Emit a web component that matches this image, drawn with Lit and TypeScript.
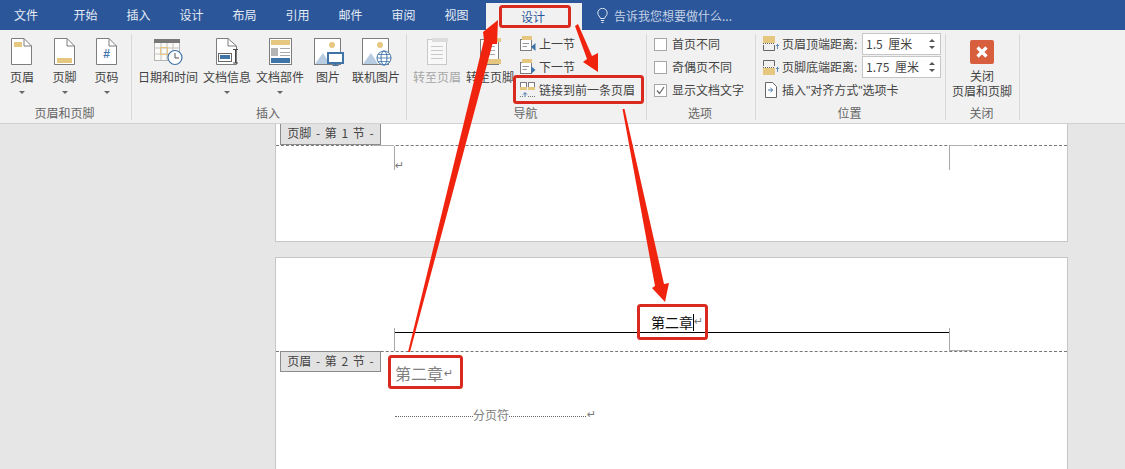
import { LitElement, html, css, svg } from "lit";
import { customElement } from "lit/decorators.js";

const G = "#e6c77f";
const B = "#3f74a8";
const S = "#7d7d7d";

const page = (inner: unknown, w = 34, dx = 6) => html`<svg width="${w}" height="28" viewBox="0 0 ${w} 28">
  <g transform="translate(${dx} 0)">
    <path d="M.5.5H13L20.500 8V26.500H.5Z" fill="#fff" stroke="${S}"/><path d="M13 .5V8H20.500" fill="none" stroke="${S}"/>
    ${inner}
  </g></svg>`;

const icons: Record<string, unknown> = {
  header: page(svg`<rect x="3" y="4" width="8" height="5" fill="${G}"/>`),
  footer: page(svg`<rect x="3" y="20" width="15" height="5" fill="${G}"/>`),
  number: page(svg`<text x="10.500" y="20" text-anchor="middle" font-family="Liberation Sans" font-size="12" font-weight="700" fill="${B}">#</text>`),
  date: html`<svg width="34" height="28" viewBox="0 0 34 28">
    <rect x="3.500" y="2.500" width="25" height="20" fill="#fbfaf6" stroke="#b5b5b5"/>
    <rect x="3" y="1" width="26" height="4" fill="#777"/>
    <path d="M3.500 10H28M3.500 16H28M10 5V22M16 5V22M22 5V22" stroke="#c2c2c2"/>
    <rect x="9.500" y="9.500" width="7" height="7" fill="none" stroke="${G}"/>
    <circle cx="24" cy="19.500" r="7" fill="#fff" stroke="${B}" stroke-width="1.200"/>
    <path d="M24 15V20H28" fill="none" stroke="#555"/></svg>`,
  info: html`<svg width="34" height="28" viewBox="0 0 34 28">
    <path d="M6.500.5H18L26.500 8V26.500H6.500Z" fill="#fff" stroke="${S}"/><path d="M18 .5V8H26.500" fill="none" stroke="${S}"/>
    <rect x="8.500" y="15.500" width="13" height="8" fill="#fff" stroke="#666"/>
    <rect x="10" y="17" width="10" height="4" fill="${B}"/>
    <path d="M23 11.500H28M25.500 11.500V25M23 25H28" fill="none" stroke="#444"/></svg>`,
  parts: html`<svg width="34" height="28" viewBox="0 0 34 28">
    <rect x="6.500" y=".5" width="22" height="26" fill="#fff" stroke="${S}"/>
    <rect x="8" y="2" width="19" height="5" fill="${G}"/>
    <rect x="8" y="10" width="7" height="8" fill="#b5b5b5"/>
    <path d="M17 10.500H27M17 14.500H27M17 17.500H27" stroke="#aaa"/>
    <rect x="8" y="20" width="19" height="5" fill="${B}"/></svg>`,
  picture: html`<svg width="34" height="28" viewBox="0 0 34 28">
    <rect x="3.500" y=".5" width="26" height="26" fill="#fff" stroke="${S}"/>
    <circle cx="21" cy="7" r="3" fill="${G}"/>
    <path d="M4 26L12 15L19 26Z" fill="#b9cde2"/>
    <rect x="17" y="15" width="15" height="10" fill="#fff" stroke="${B}" stroke-width="2"/>
    <path d="M24.500 25V27M21.500 27.500H27.500" stroke="${B}"/></svg>`,
  online: html`<svg width="34" height="28" viewBox="0 0 34 28">
    <rect x="3.500" y=".5" width="26" height="26" fill="#fff" stroke="${S}"/>
    <circle cx="21" cy="7" r="3" fill="${G}"/>
    <path d="M4 26L12 15L19 26Z" fill="#b9cde2"/>
    <circle cx="25" cy="20" r="7" fill="#fff" stroke="${B}"/>
    <ellipse cx="25" cy="20" rx="3" ry="7" fill="none" stroke="${B}"/>
    <path d="M18 20H32M19 16.500H31M19 23.500H31" stroke="${B}" stroke-width=".8"/></svg>`,
  gotoH: html`<svg width="34" height="28" viewBox="0 0 34 28">
    <rect x="7.500" y="1.500" width="19" height="25" fill="#f8f8f8" stroke="#c9c9c9"/>
    <rect x="12" y="0" width="16" height="4" fill="#dcdcdc"/>
    <path d="M11 8.500H23M11 12.500H23M11 16.500H23M11 20.500H23" stroke="#c9c9c9"/></svg>`,
  gotoF: html`<svg width="34" height="28" viewBox="0 0 34 28">
    <rect x="7.500" y="1.500" width="18" height="25" fill="#fff" stroke="${S}"/>
    <rect x="21" y="0" width="7" height="4" fill="${G}"/>
    <rect x="8" y="21" width="20" height="5" fill="${G}"/>
    <path d="M11 8.500H22M11 12.500H22M11 16.500H22" stroke="#aaa"/></svg>`,
  prev: html`<svg width="16" height="16" viewBox="0 0 16 16">
    <rect x=".5" y="3.500" width="11" height="11" fill="#fff" stroke="${S}"/>
    <rect x="2" y="0" width="10" height="4" fill="${G}"/>
    <path d="M2.500 7.500H9M2.500 10.500H7" stroke="#999"/>
    <path d="M15.500 7V15L11 11Z" fill="${B}"/></svg>`,
  next: html`<svg width="16" height="16" viewBox="0 0 16 16">
    <rect x=".5" y="3.500" width="11" height="11" fill="#fff" stroke="${S}"/>
    <rect x="2" y="0" width="10" height="4" fill="${G}"/>
    <path d="M2.500 7.500H9M2.500 10.500H7" stroke="#999"/>
    <path d="M11 7V15L15.500 11Z" fill="${B}"/></svg>`,
  link: html`<svg width="16" height="16" viewBox="0 0 16 16">
    <rect x=".5" y=".5" width="6" height="5" fill="#fff" stroke="${S}"/><rect x="8.500" y=".5" width="6" height="5" fill="#fff" stroke="${S}"/>
    <rect x="0" y="5" width="7" height="3" fill="${G}"/><rect x="8" y="5" width="7" height="3" fill="${G}"/>
    <path d="M5 15V11M3 12.500L5 10.500L7 12.500" fill="none" stroke="${B}"/>
    <path d="M0 14.500H3M8 14.500H15" stroke="#777" stroke-dasharray="1 1"/></svg>`,
  top: html`<svg width="16" height="16" viewBox="0 0 16 16">
    <rect x="0" y="0" width="12" height="7" fill="${G}"/>
    <path d="M.5 9V14.500H11.500V9" fill="none" stroke="#666"/>
    <path d="M0 7.500H12" stroke="#666" stroke-dasharray="1 1"/>
    <path d="M14.500 8V13M13 10L14.500 8.500L16 10" fill="none" stroke="${B}" stroke-width=".8"/></svg>`,
  bottom: html`<svg width="16" height="16" viewBox="0 0 16 16">
    <rect x="0" y="9" width="12" height="7" fill="${G}"/>
    <path d="M.5 7V1.500H11.500V7" fill="none" stroke="#666"/>
    <path d="M0 8.500H12" stroke="#666" stroke-dasharray="1 1"/>
    <path d="M14.500 8V13M13 10L14.500 8.500L16 10" fill="none" stroke="${B}" stroke-width=".8"/></svg>`,
  align: html`<svg width="16" height="16" viewBox="0 0 16 16">
    <path d="M2.500.5H9.500L13.500 4.500V15.500H2.500Z" fill="#fff" stroke="#666"/>
    <path d="M5 8H9M7.500 6L9.800 8L7.500 10" fill="none" stroke="${B}"/></svg>`,
  close: html`<svg width="34" height="28" viewBox="0 0 34 28">
    <rect x="5" y="2" width="24" height="24" rx="2" fill="#d75f3e"/>
    <path d="M12.500 9.500L21.500 18.500M21.500 9.500L12.500 18.500" stroke="#fff" stroke-width="3.200"/></svg>`,
};

const tabs = ["开始", "插入", "设计", "布局", "引用", "邮件", "审阅", "视图"];

type Big = { icon: string; label: string; w: number; arrow?: boolean; off?: boolean };

@customElement("app-root")
export class AppRoot extends LitElement {
  static styles = css`
    :host { display: block; width: 1125px; height: 469px; overflow: hidden; position: relative;
      font-family: "Noto Sans CJK SC", "Liberation Sans", sans-serif; font-size: 12px; color: #444; }
    .bar { height: 30px; background: #2b579a; display: flex; color: #e6ecf5; }
    .tab { width: 53px; line-height: 30px; text-align: center; flex: none; }
    .file { width: 52px; margin-right: 7px; }
    .view { margin-right: 3px; }
    .active { width: 94px; padding-right: 2px; margin-top: 3px; line-height: 27px; background: #f1f1f1; color: #2b579a; }
    .tell { display: flex; align-items: center; gap: 6px; margin-left: 15px; color: #c3d0e4; }
    .ribbon { height: 94px; box-sizing: border-box; background: #f1f1f1; border-bottom: 1px solid #d2d2d2; padding-top: 4px; display: flex; }
    .group { height: 86px; border-right: 1px solid #d8d8d8; display: flex; flex-direction: column; justify-content: space-between; flex: none; box-sizing: border-box; }
    .content { display: flex; }
    .glabel { text-align: center; line-height: 14px; color: #666; padding-right: 2px; }
    .big { display: flex; flex-direction: column; align-items: center; flex: none; padding-top: 4px; white-space: nowrap; }
    .big svg { display: block; }
    .big .t { line-height: 16px; margin-top: 3px; }
    .off { color: #a6a6a6; }
    .caret { width: 0; height: 0; border: 3px solid transparent; border-top: 3px solid #666; border-bottom: 0; margin-top: 6px; }
    .g1 { width: 132px; }
    .g2 { width: 275px; }
    .g2 .content { padding-left: 6px; gap: 5px; }
    .g3 { width: 240px; }
    .g3 .content { padding-left: 6px; gap: 5px; }
    .g4 { width: 109px; }
    .g5 { width: 190px; }
    .g6 { width: 74px; }
    .stack { display: flex; flex-direction: column; gap: 3px; }
    .nav { margin-left: 1px; }
    .row { height: 20px; display: flex; align-items: center; gap: 3px; white-space: nowrap; }
    .row > span { margin-bottom: 2px; }
    .checks { padding-left: 7px; }
    .check { gap: 5px; color: #444; }
    .box { width: 11px; height: 11px; border: 1px solid #a6a6a6; background: #fff; display: flex; }
    .pos { padding-left: 7px; gap: 1px; margin-top: -1px; }
    .pos .row { height: 22px; }
    .pos .name { width: 77px; }
    .field { width: 74px; height: 20px; border: 1px solid #c6c6c6; background: #fff; display: flex; align-items: center; justify-content: space-between; padding-left: 3px; word-spacing: 3px; }
    .field span { margin-bottom: 2px; }
    .q { font-family: "Liberation Sans", sans-serif; }
    .spin { display: flex; flex-direction: column; gap: 4px; margin-right: 5px; }
    .spin i { width: 0; height: 0; border-left: 3px solid transparent; border-right: 3px solid transparent; }
    .spin .u { border-bottom: 3px solid #555; }
    .spin .d { border-top: 3px solid #555; }
    .g6 .content { justify-content: center; text-align: center; padding-right: 1px; }
    .close { display: flex; flex-direction: column; align-items: center; padding-top: 4px; line-height: 15px; white-space: nowrap; }
    .close svg { display: block; margin-bottom: 2px; }

    .doc { height: 345px; background: #e6e6e6; overflow: hidden; padding-left: 275px; box-sizing: border-box; }
    .page { position: relative; width: 793px; background: #fff; border: 1px solid #c6c6c6; box-sizing: border-box; }
    .p1 { height: 118px; border-top: 0; padding-top: 21px; }
    .p2 { margin-top: 15px; height: 300px; padding-top: 54px; }
    .dash { border-top: 1px dashed #777; height: 0; }
    .tag { position: absolute; left: 4px; width: 101px; height: 21px; box-sizing: border-box; background: #e2e2e2; border: 1px solid #8c8c8c; line-height: 18px; text-align: center; color: #444; white-space: pre; word-spacing: 2px; }
    .p1 .tag { top: 0; border-top: 0; height: 21px; }
    .p2 .tag { top: 93px; }
    .marks { margin-left: 118px; width: 556px; box-sizing: border-box; border-left: 1px solid #a8a8a8; border-right: 1px solid #a8a8a8; position: relative; }
    .m1 { height: 24px; }
    .stub-l, .stub-r { position: absolute; width: 22px; border-top: 1px solid #b0b0b0; }
    .m1 .stub-l { left: -23px; top: -1px; }
    .m1 .stub-r { right: -23px; top: -1px; }
    .m2 { height: 23px; margin-top: -5px; }
    .m2 .stub-r { right: -23px; bottom: 0; }
    .ret { font-family: "DejaVu Sans", sans-serif; font-size: 11px; color: #777; line-height: 10px; }
    .m1 .ret { position: absolute; left: 0; top: 15px; }
    .hdr { margin-left: 118px; width: 556px; height: 20px; border-bottom: 1px solid #000; text-align: center; line-height: 20px; font-size: 14px; color: #111; }
    .cur { position: absolute; width: 1px; height: 17px; background: #000; margin-top: 2px; }
    .hdr .ret { position: absolute; margin-left: 1px; margin-top: 5px; }
    .gray { margin: 10px 0 0 119px; font-size: 16px; line-height: 22px; color: #808080; display: flex; align-items: center; }
    .gray .ret { margin-left: 1px; margin-top: 2px; }
    .brk { margin: 24px 0 0 119px; display: flex; align-items: center; width: 240px; color: #808080; line-height: 14px; white-space: nowrap; }
    .brk i { flex: none; height: 0; border-top: 1px dotted #666; margin-top: 2px; }
    .brk .a { width: 78px; }
    .brk .b { width: 77px; }
    .brk .ret { margin-left: 1px; }
    .over { position: absolute; left: 0; top: 0; pointer-events: none; }
  `;

  big(b: Big) {
    return html`<div class="big ${b.off ? "off" : ""}" style="width:${b.w}px">
      ${icons[b.icon]}<div class="t">${b.label}</div>${b.arrow ? html`<div class="caret"></div>` : ""}
    </div>`;
  }

  render() {
    const g1: Big[] = [
      { icon: "header", label: "页眉", w: 44, arrow: true },
      { icon: "footer", label: "页脚", w: 41, arrow: true },
      { icon: "number", label: "页码", w: 43, arrow: true },
    ];
    const g2: Big[] = [
      { icon: "date", label: "日期和时间", w: 60 },
      { icon: "info", label: "文档信息", w: 48, arrow: true },
      { icon: "parts", label: "文档部件", w: 48, arrow: true },
      { icon: "picture", label: "图片", w: 38 },
      { icon: "online", label: "联机图片", w: 48 },
    ];
    return html`
      <div class="bar">
        <div class="tab file">文件</div>
        ${tabs.map((t) => html`<div class="tab ${t === "视图" ? "view" : ""}">${t}</div>`)}
        <div class="tab active">设计</div>
        <div class="tell">
          <svg width="11" height="15" viewBox="0 0 11 15"><path d="M3.500 10.500C3 8.500 .8 7.500 .8 5A4.700 4.700 0 0 1 10.200 5C10.200 7.500 8 8.500 7.500 10.500ZM3.800 12.500H7.200M4.500 14.500H6.500" fill="none" stroke="#dfe6f1"/></svg>
          <span>告诉我您想要做什么...</span>
        </div>
      </div>
      <div class="ribbon">
        <div class="group g1">
          <div class="content">${g1.map((b) => this.big(b))}</div>
          <div class="glabel">页眉和页脚</div>
        </div>
        <div class="group g2">
          <div class="content">${g2.map((b) => this.big(b))}</div>
          <div class="glabel">插入</div>
        </div>
        <div class="group g3">
          <div class="content">
            ${this.big({ icon: "gotoH", label: "转至页眉", w: 48, off: true })}
            ${this.big({ icon: "gotoF", label: "转至页脚", w: 48 })}
            <div class="stack nav">
              <div class="row">${icons.prev}<span>上一节</span></div>
              <div class="row">${icons.next}<span>下一节</span></div>
              <div class="row">${icons.link}<span>链接到前一条页眉</span></div>
            </div>
          </div>
          <div class="glabel">导航</div>
        </div>
        <div class="group g4">
          <div class="stack checks">
            <div class="row check"><div class="box"></div><span>首页不同</span></div>
            <div class="row check"><div class="box"></div><span>奇偶页不同</span></div>
            <div class="row check"><div class="box"><svg width="11" height="11" viewBox="0 0 11 11"><path d="M2 5.500L4.500 8.500L9 2" fill="none" stroke="#666" stroke-width="1.200"/></svg></div><span>显示文档文字</span></div>
          </div>
          <div class="glabel">选项</div>
        </div>
        <div class="group g5">
          <div class="stack pos">
            <div class="row">${icons.top}<span class="name">页眉顶端距离:</span>
              <div class="field"><span>1.5 厘米</span><div class="spin"><i class="u"></i><i class="d"></i></div></div></div>
            <div class="row">${icons.bottom}<span class="name">页脚底端距离:</span>
              <div class="field"><span>1.75 厘米</span><div class="spin"><i class="u"></i><i class="d"></i></div></div></div>
            <div class="row">${icons.align}<span>插入<span class="q">"</span>对齐方式<span class="q">"</span>选项卡</span></div>
          </div>
          <div class="glabel">位置</div>
        </div>
        <div class="group g6">
          <div class="content">
            <div class="close">${icons.close}<span>关闭</span><span>页眉和页脚</span></div>
          </div>
          <div class="glabel">关闭</div>
        </div>
      </div>
      <div class="doc">
        <div class="page p1">
          <div class="tag">页脚 - 第 1 节 -</div>
          <div class="dash"></div>
          <div class="marks m1"><div class="stub-l"></div><div class="stub-r"></div><span class="ret">↵</span></div>
        </div>
        <div class="page p2">
          <div class="hdr">第二章<span class="cur"></span><span class="ret">↵</span></div>
          <div class="marks m2"><div class="stub-r"></div></div>
          <div class="dash"></div>
          <div class="tag">页眉 - 第 2 节 -</div>
          <div class="gray"><span>第二章</span><span class="ret">↵</span></div>
          <div class="brk"><i class="a"></i><span>分页符</span><i class="b"></i><span class="ret">↵</span></div>
        </div>
      </div>
      <svg class="over" width="1125" height="469" viewBox="0 0 1125 469">
        <g fill="none" stroke="#d92a20" stroke-width="3">
          <rect x="500.500" y="6.500" width="69" height="20" rx="2"/>
          <rect x="514.500" y="76.500" width="128" height="26" rx="2"/>
          <rect x="389.500" y="356.500" width="72" height="31" rx="2"/>
          <rect x="638.500" y="305.500" width="68" height="33" rx="2"/>
        </g>
        <g fill="#f0230f">
          <polygon points="408,352 484,40 483,32 498,20 497,44 492.500,44 410,352"/>
          <polygon points="575,26 578,24 592,56 598,53 598,72 583,62 587,59"/>
          <polygon points="622.500,109 624.500,109 664,284 669,283 665,302 652,288 655,286"/>
        </g>
      </svg>
    `;
  }
}
